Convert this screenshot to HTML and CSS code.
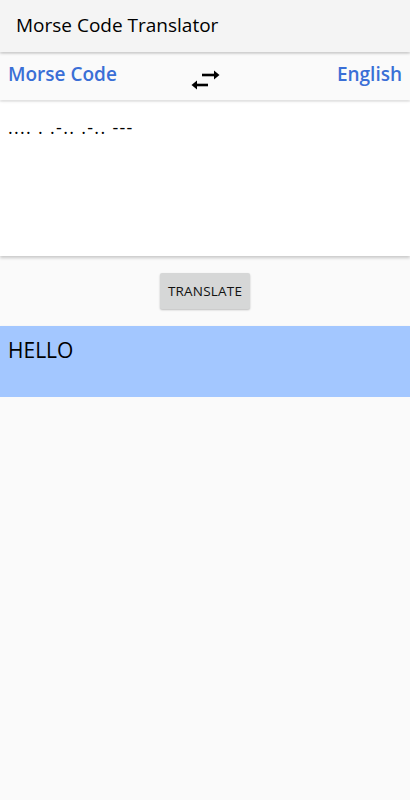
FILE: index.html
```html
<!DOCTYPE html>
<html>
<head>
<meta charset="utf-8">
<link rel="stylesheet" href="styles.css">
</head>
<body>
<header class="appbar">Morse Code Translator</header>
<div class="langbar">
  <span class="lang">Morse Code</span>
  <svg class="swap" width="30" height="24" viewBox="190 66 30 24">
    <path d="M202 73 H215" stroke="#000" stroke-width="2.6" fill="none"/>
    <path d="M214 68.5 L219.5 73 L214 77.5 Z" fill="#000"/>
    <path d="M196 83 H208" stroke="#000" stroke-width="2.6" fill="none"/>
    <path d="M197 78.5 L191.5 83 L197 87.5 Z" fill="#000"/>
  </svg>
  <span class="lang lang-right">English</span>
</div>
<div class="input">.... . .-.. .-.. ---</div>
<div class="actions"><button class="btn">TRANSLATE</button></div>
<div class="output">HELLO</div>
</body>
</html>
```
FILE: styles.css
```css
html, body {
  margin: 0;
  padding: 0;
  background: #fafafa;
  font-family: "Open Sans", "Noto Sans", sans-serif;
  color: #000;
}
.appbar {
  height: 52px;
  box-sizing: border-box;
  padding: 12px 16px 0;
  font-size: 19px;
  background: #f4f4f4;
  box-shadow: 0 1px 3px rgba(0,0,0,0.25);
  position: relative;
  z-index: 2;
}
.langbar {
  margin-top: 2px;
  height: 46px;
  box-sizing: border-box;
  padding: 0 8px 6px;
  display: grid;
  grid-template-columns: 1fr auto 1fr;
  align-items: center;
  background: #fafafa;
  box-shadow: 0 1px 3px rgba(0,0,0,0.15);
  position: relative;
  z-index: 1;
}
.lang {
  color: #3a6fd6;
  font-weight: 600;
  font-size: 19px;
}
.lang-right {
  text-align: right;
}
.swap {
  margin-top: 11px;
  display: block;
}
.input {
  margin-top: 2px;
  height: 154px;
  box-sizing: border-box;
  background: #fff;
  padding: 14px 8px;
  font-size: 18px;
  letter-spacing: 1.3px;
  line-height: 22px;
  box-shadow: 0 2px 3px rgba(0,0,0,0.2);
}
.actions {
  display: flex;
  justify-content: center;
  padding-top: 17px;
  height: 70px;
  box-sizing: border-box;
}
.btn {
  width: 90px;
  height: 36px;
  border: none;
  border-radius: 2px;
  background: #d6d7d7;
  font-family: "Open Sans", sans-serif;
  font-size: 13.5px;
  letter-spacing: 0.2px;
  color: #111;
  box-shadow: 0 1px 2px rgba(0,0,0,0.25);
  padding: 0;
}
.output {
  height: 71px;
  box-sizing: border-box;
  background: #a3c7ff;
  padding: 12px 8px;
  font-size: 21px;
  line-height: 24px;
  box-shadow: 0 2px 3px rgba(0,0,0,0.25);
}
```
